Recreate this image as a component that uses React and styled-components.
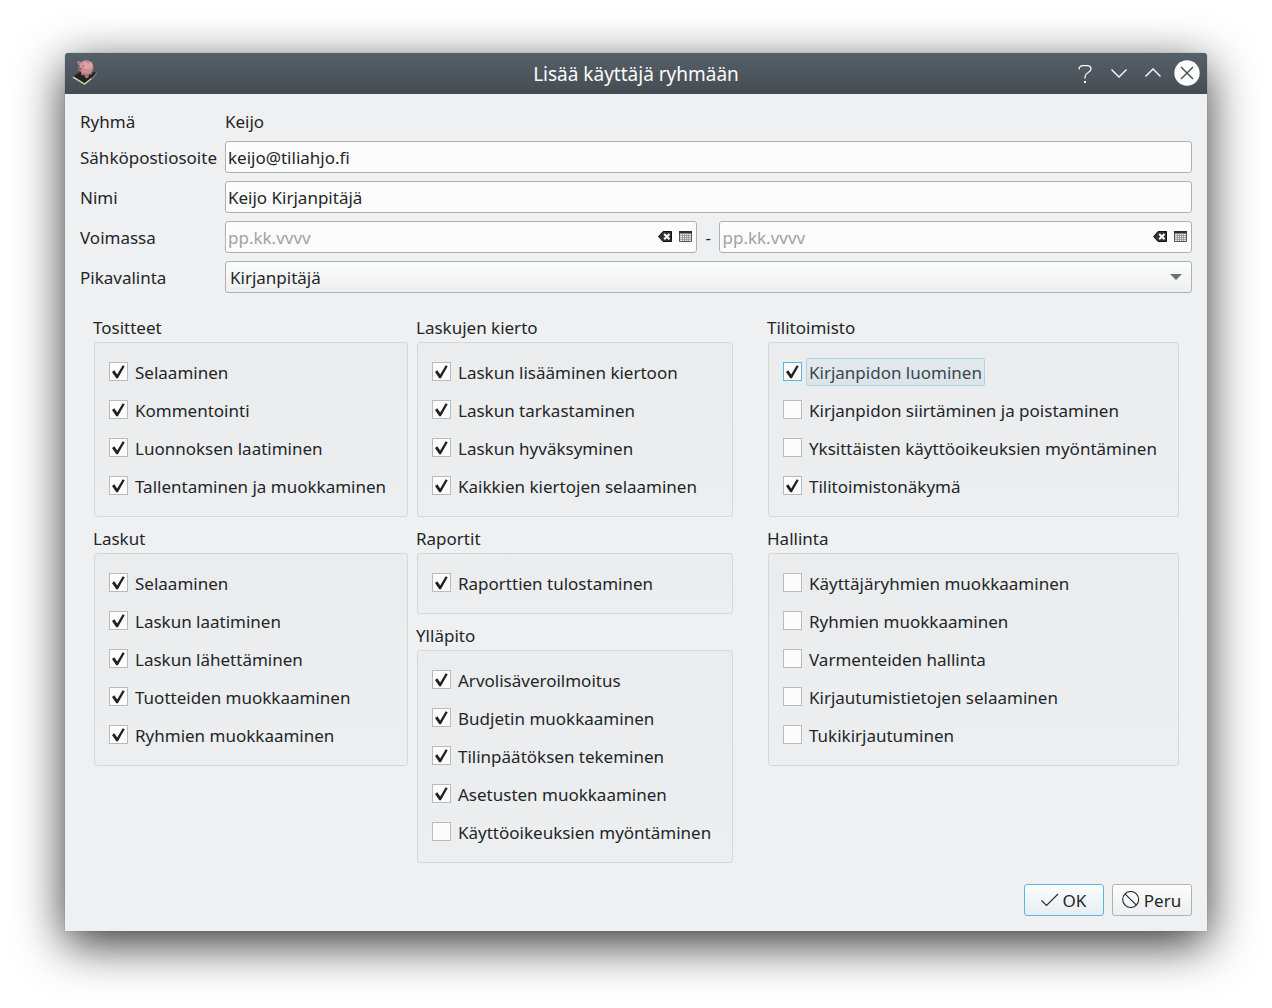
import React, { useState } from "react";
import styled, { createGlobalStyle } from "styled-components";

const ink = "#232629";
const line = "#aeb0b2";
const accent = "#5eb3e4";

const GlobalStyle = createGlobalStyle`
  *, *::before, *::after { box-sizing: border-box; }
  body {
    margin: 0;
    background: #fff;
    color: ${ink};
    font: 17px/24px "Noto Sans", sans-serif;
  }
  button, input, select { font: inherit; color: inherit; margin: 0; }
`;

const Desktop = styled.div`
  padding: 53px 65px 77px;
`;

const Dialog = styled.main`
  background: #eff0f1;
  border-radius: 4px 4px 0 0;
  box-shadow: 0 0 1px rgba(0, 0, 0, 0.5), 0 13px 48px rgba(0, 0, 0, 0.8);
`;

const TitleBar = styled.header`
  display: grid;
  grid-template-columns: 1fr auto 1fr;
  align-items: center;
  height: 41px;
  padding: 0 7px 1px;
  border-radius: 3px 3px 0 0;
  background: linear-gradient(#566068, #454d54);
  color: #fcfcfc;
`;

const Title = styled.h1`
  margin: 0;
  padding-top: 2px;
  font-size: 19px;
  font-weight: 400;
  line-height: 24px;
`;

const WindowButtons = styled.div`
  display: flex;
  justify-content: flex-end;
  gap: 8px;
`;

const WindowButton = styled.button`
  display: grid;
  place-items: center;
  width: 26px;
  height: 26px;
  padding: 0;
  border: 0;
  background: none;
`;

const Body = styled.form`
  padding: 15px;
`;

const Fields = styled.div`
  display: grid;
  grid-template-columns: auto 1fr;
  align-items: center;
  gap: 8px;
`;

const FieldLabel = styled.label`
  padding-top: 2px;
  line-height: 24px;
`;

const PlainText = styled.span`
  padding-top: 2px;
  line-height: 22px;
`;

const Field = styled.div`
  display: flex;
  align-items: center;
  height: 32px;
  min-width: 0;
  flex: 1;
  border: 1px solid ${line};
  border-radius: 3px;
  background: #fcfcfc;
`;

const TextInput = styled.input`
  flex: 1;
  min-width: 0;
  height: 30px;
  padding: 0 2px;
  border: 0;
  outline: 0;
  background: none;
  &::placeholder { color: #a0a2a3; opacity: 1; }
`;

const IconButton = styled.button`
  display: grid;
  place-items: center;
  width: 20px;
  height: 20px;
  padding: 0;
  border: 0;
  background: none;
`;

const DateRange = styled.div`
  display: flex;
  align-items: center;
  gap: 8px;
`;

const Dash = styled.span`
  width: 6px;
  padding-top: 2px;
`;

const DateField = styled(Field)`
  padding-right: 1px;
`;

const Combo = styled(Field)`
  display: grid;
  grid-template-columns: 1fr auto;
  padding-right: 9px;
  background: linear-gradient(#fcfcfc, #eeeff0);
`;

const Select = styled.select`
  grid-area: 1 / 1 / 2 / 3;
  width: 100%;
  height: 30px;
  padding: 2px 4px 0;
  border: 0;
  outline: 0;
  appearance: none;
  background: none;
`;

const Arrow = styled.svg`
  grid-area: 1 / 2;
  pointer-events: none;
`;

const Groups = styled.div`
  display: grid;
  grid-template-columns: 314fr 316fr 437fr;
  align-items: start;
  gap: 9px;
  padding: 22px 13px 0 14px;
`;

const Column = styled.div`
  display: grid;
  gap: 9px;
  padding-left: ${(p) => (p.$apart ? "26px" : "0")};
`;

const Group = styled.section`
  display: grid;
  gap: 2px;
`;

const GroupTitle = styled.h2`
  margin: 0 0 0 -1px;
  font-size: 17px;
  font-weight: 400;
  line-height: 25px;
`;

const GroupBox = styled.div`
  display: grid;
  gap: 8px;
  padding: 15px 14px 14px;
  border: 1px solid #d5d7d8;
  border-radius: 3px;
  background: linear-gradient(#ebeced, #eceeef);
`;

const CheckRow = styled.label`
  display: flex;
  align-items: flex-start;
  gap: 4px;
  height: 30px;
`;

const Tick = styled.span`
  display: grid;
  flex: none;
  margin-top: 4px;
  svg { grid-area: 1 / 1; pointer-events: none; }
`;

const CheckInput = styled.input`
  grid-area: 1 / 1;
  width: 19px;
  height: 19px;
  appearance: none;
  border: 1px solid ${(p) => (p.$current ? accent : "#b9bbbc")};
  background: #fcfcfc;
`;

const CheckText = styled.span`
  padding: 2px 2px 0;
  border: 1px solid ${(p) => (p.$current ? "#b0d3e5" : "transparent")};
  border-radius: 2px;
  background: ${(p) => (p.$current ? "linear-gradient(#e3eaed, #d9e5eb)" : "none")};
  color: ${(p) => (p.$current ? "#3d454a" : ink)};
  line-height: 24px;
  white-space: nowrap;
`;

const Actions = styled.footer`
  display: flex;
  justify-content: flex-end;
  gap: 8px;
  padding-top: 21px;
`;

const ActionButton = styled.button`
  display: flex;
  align-items: center;
  justify-content: center;
  gap: 4px;
  width: 80px;
  height: 32px;
  padding: 0 1px 0 0;
  border: 1px solid ${(p) => (p.$primary ? accent : line)};
  border-radius: 3px;
  background: ${(p) => (p.$primary ? "linear-gradient(#fcfcfc, #e6edf1)" : "linear-gradient(#fcfcfc, #eeeff0)")};
  span { padding-top: 2px; }
`;

function PigLogo() {
  return (
    <svg width="28" height="28" viewBox="0 0 28 28" aria-hidden="true">
      <path d="M1 17.500 8 13l17 0.500L13 24.500Z" fill="#1f2221" />
      <path d="M1 18 12.500 25.200 19.500 19.500" fill="none" stroke="#cfc9ae" strokeWidth="1.500" />
      <path d="m20.500 19.500 4.500-6" stroke="#77756a" strokeWidth="1.300" />
      <path d="M9 11v4.500q1.500 1.500 3.500.5l.5 2.500q2 1 3.500 0l.5-3q2 .5 3-.5l.5-5Z" fill="#a97278" />
      <ellipse cx="14.200" cy="8" rx="7.300" ry="6.800" fill="#cc9093" />
      <ellipse cx="15.500" cy="6" rx="4.800" ry="4" fill="#dca4a6" />
      <path d="m5 2.200 4 .3-2.500 3.200ZM13 2.500l4-1 .5 3.500Z" fill="#c18589" />
      <path d="M6.500 5.500q3-2.500 5 0l.5 4q-1.500 3.500-5 2Z" fill="#d3989b" />
      <ellipse cx="8" cy="10" rx="2" ry="1.500" fill="#ad6c73" />
      <path d="M7 7h1m2.800 0h1M7 10h.6m1.200 0h.6" stroke="#43292c" />
    </svg>
  );
}

function HelpIcon() {
  return (
    <svg width="26" height="26" viewBox="0 0 26 26" fill="none" stroke="#fcfcfc" strokeWidth="1.300" aria-hidden="true">
      <path d="M7 9.500C7 6.800 9 5.600 11 5.600h4c2.300 0 4 1.500 4 3.400 0 4-6 3.500-6 7.500v2" />
      <path d="M12 21h2v2h-2z" fill="#fcfcfc" stroke="none" />
    </svg>
  );
}

function ChevronIcon({ up }) {
  return (
    <svg width="26" height="26" viewBox="0 0 26 26" fill="none" stroke="#fcfcfc" strokeWidth="1.400" aria-hidden="true">
      <path d={up ? "m5.500 16.500 7.500-7.500 7.500 7.500" : "m5.500 9.500 7.500 7.500 7.500-7.500"} />
    </svg>
  );
}

function CloseIcon() {
  return (
    <svg width="26" height="26" viewBox="0 0 26 26" fill="none" aria-hidden="true">
      <circle cx="13" cy="13" r="12.700" fill="#fcfcfc" />
      <path d="m7 7 12 12M19 7 7 19" stroke="#4b545b" strokeWidth="1.500" />
    </svg>
  );
}

function ClearIcon() {
  return (
    <svg width="14" height="12" viewBox="0 0 14 12" aria-hidden="true">
      <path d="M5 .5h8.500v10H5L.5 5.500Z" fill="#303234" stroke="#111" />
      <path d="m6.200 3 5.300 5.300M11.500 3 6.200 8.300" stroke="#fff" strokeWidth="2" />
    </svg>
  );
}

function CalendarIcon() {
  return (
    <svg width="13" height="12" viewBox="0 0 13 12" aria-hidden="true">
      <path d="M.5.5h12v10H.5z" fill="#e4e4e4" stroke="#55585a" />
      <path d="M0 0h13v2.500H0z" fill="#2c2e30" />
      <path d="M1 4.500h11M1 6.500h11M1 8.500h11M3.500 3v7M5.500 3v7M7.500 3v7M9.500 3v7" stroke="#8b8d8f" strokeWidth=".7" />
    </svg>
  );
}

function Mark() {
  return (
    <svg width="19" height="19" viewBox="0 0 19 19" fill="#1f2224" aria-hidden="true">
      <path d="M3 10 5.300 8.300 8.200 12.500 13.700 3.200 15.700 4.200 8.900 16.300H7.300Z" />
    </svg>
  );
}

function OkIcon() {
  return (
    <svg width="18" height="18" viewBox="0 0 18 18" fill="none" stroke={ink} strokeWidth="1.100" aria-hidden="true">
      <path d="M.5 9.500 5.500 14.500 17 3" />
    </svg>
  );
}

function CancelIcon() {
  return (
    <svg width="18" height="18" viewBox="0 0 18 18" fill="none" stroke={ink} strokeWidth="1.100" aria-hidden="true">
      <circle cx="8.700" cy="8.500" r="8" />
      <path d="m3 2.800 11.400 11.400" />
    </svg>
  );
}

const columns = [
  [
    ["Tositteet", [["Selaaminen", 1], ["Kommentointi", 1], ["Luonnoksen laatiminen", 1], ["Tallentaminen ja muokkaminen", 1]]],
    ["Laskut", [["Selaaminen", 1], ["Laskun laatiminen", 1], ["Laskun lähettäminen", 1], ["Tuotteiden muokkaaminen", 1], ["Ryhmien muokkaaminen", 1]]],
  ],
  [
    ["Laskujen kierto", [["Laskun lisääminen kiertoon", 1], ["Laskun tarkastaminen", 1], ["Laskun hyväksyminen", 1], ["Kaikkien kiertojen selaaminen", 1]]],
    ["Raportit", [["Raporttien tulostaminen", 1]]],
    ["Ylläpito", [["Arvolisäveroilmoitus", 1], ["Budjetin muokkaaminen", 1], ["Tilinpäätöksen tekeminen", 1], ["Asetusten muokkaaminen", 1], ["Käyttöoikeuksien myöntäminen", 0]]],
  ],
  [
    ["Tilitoimisto", [["Kirjanpidon luominen", 1, true], ["Kirjanpidon siirtäminen ja poistaminen", 0], ["Yksittäisten käyttöoikeuksien myöntäminen", 0], ["Tilitoimistonäkymä", 1]]],
    ["Hallinta", [["Käyttäjäryhmien muokkaaminen", 0], ["Ryhmien muokkaaminen", 0], ["Varmenteiden hallinta", 0], ["Kirjautumistietojen selaaminen", 0], ["Tukikirjautuminen", 0]]],
  ],
];

function Permission({ text, initial, current }) {
  const [on, setOn] = useState(Boolean(initial));
  return (
    <CheckRow>
      <Tick>
        <CheckInput type="checkbox" checked={on} $current={current} onChange={(e) => setOn(e.target.checked)} />
        {on && <Mark />}
      </Tick>
      <CheckText $current={current}>{text}</CheckText>
    </CheckRow>
  );
}

function DateBox({ id, label }) {
  return (
    <DateField>
      <TextInput id={id} aria-label={label} placeholder="pp.kk.vvvv" />
      <IconButton type="button" aria-label="Tyhjennä"><ClearIcon /></IconButton>
      <IconButton type="button" aria-label="Kalenteri"><CalendarIcon /></IconButton>
    </DateField>
  );
}

export default function App() {
  return (
    <Desktop>
      <GlobalStyle />
      <Dialog>
        <TitleBar>
          <PigLogo />
          <Title>Lisää käyttäjä ryhmään</Title>
          <WindowButtons>
            <WindowButton type="button" aria-label="Ohje"><HelpIcon /></WindowButton>
            <WindowButton type="button" aria-label="Pienennä"><ChevronIcon /></WindowButton>
            <WindowButton type="button" aria-label="Suurenna"><ChevronIcon up /></WindowButton>
            <WindowButton type="button" aria-label="Sulje"><CloseIcon /></WindowButton>
          </WindowButtons>
        </TitleBar>
        <Body onSubmit={(e) => e.preventDefault()}>
          <Fields>
            <PlainText>Ryhmä</PlainText>
            <PlainText>Keijo</PlainText>
            <FieldLabel htmlFor="email">Sähköpostiosoite</FieldLabel>
            <Field><TextInput id="email" type="email" defaultValue="keijo@tiliahjo.fi" /></Field>
            <FieldLabel htmlFor="name">Nimi</FieldLabel>
            <Field><TextInput id="name" defaultValue="Keijo Kirjanpitäjä" /></Field>
            <FieldLabel htmlFor="from">Voimassa</FieldLabel>
            <DateRange>
              <DateBox id="from" label="Voimassa alkaen" />
              <Dash>-</Dash>
              <DateBox id="to" label="Voimassa saakka" />
            </DateRange>
            <FieldLabel htmlFor="preset">Pikavalinta</FieldLabel>
            <Combo>
              <Select id="preset" defaultValue="Kirjanpitäjä"><option>Kirjanpitäjä</option></Select>
              <Arrow width="12" height="6" viewBox="0 0 12 6" aria-hidden="true"><path d="M0 0h12L6 6Z" fill="#6e7072" /></Arrow>
            </Combo>
          </Fields>
          <Groups>
            {columns.map((groups, i) => (
              <Column key={i} $apart={i === 2}>
                {groups.map(([name, items]) => (
                  <Group key={name}>
                    <GroupTitle>{name}</GroupTitle>
                    <GroupBox role="group" aria-label={name}>
                      {items.map(([text, initial, current]) => (
                        <Permission key={text} text={text} initial={initial} current={current} />
                      ))}
                    </GroupBox>
                  </Group>
                ))}
              </Column>
            ))}
          </Groups>
          <Actions>
            <ActionButton type="submit" $primary><OkIcon /><span>OK</span></ActionButton>
            <ActionButton type="button"><CancelIcon /><span>Peru</span></ActionButton>
          </Actions>
        </Body>
      </Dialog>
    </Desktop>
  );
}
